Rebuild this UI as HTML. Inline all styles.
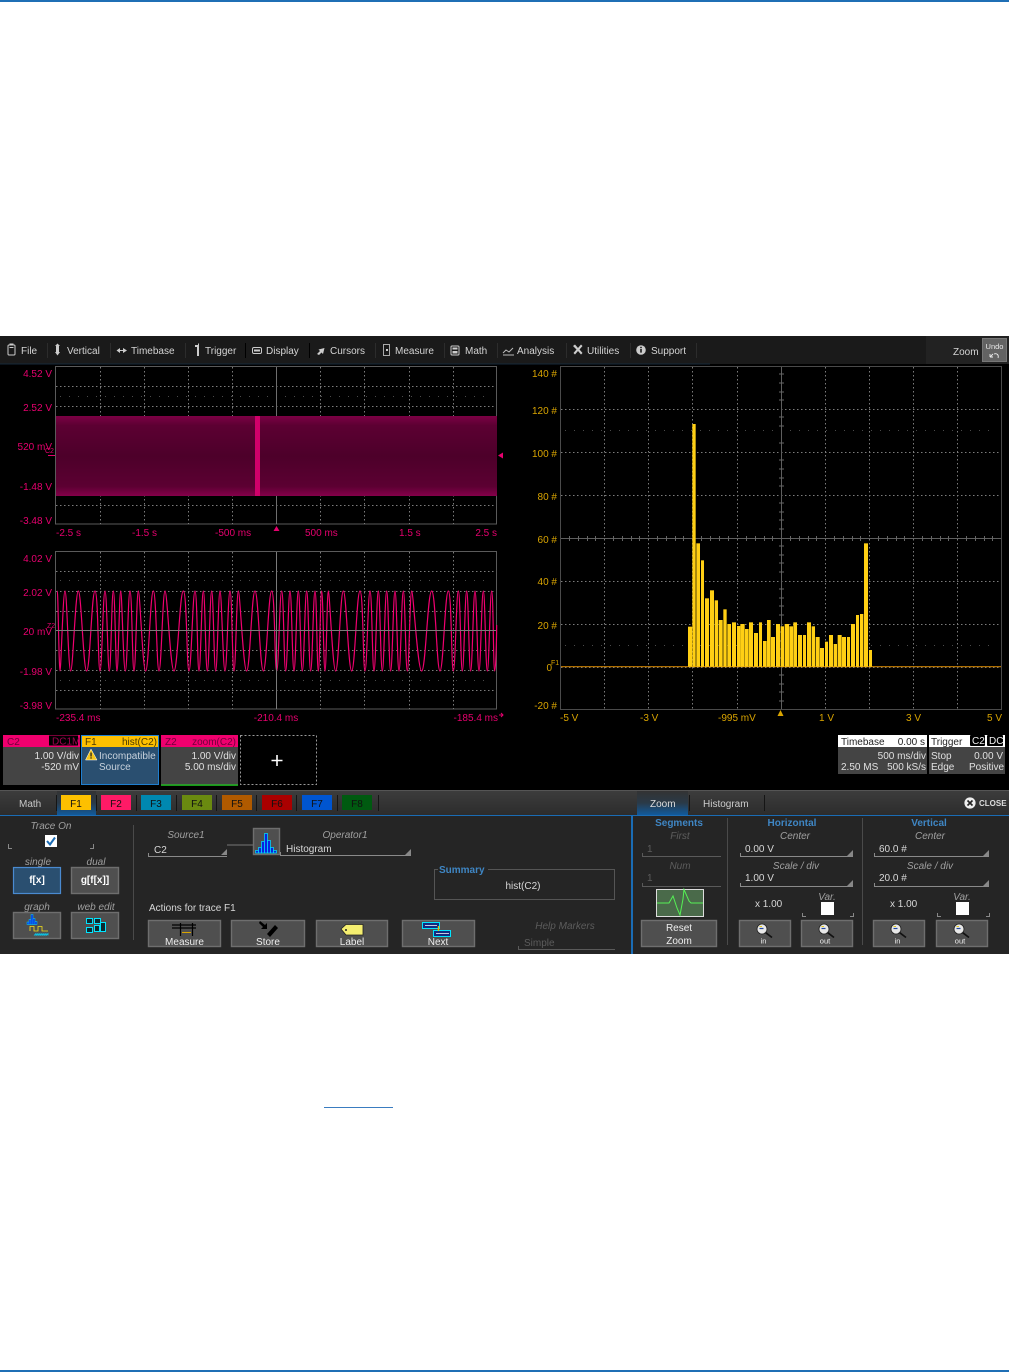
<!DOCTYPE html>
<html><head><meta charset="utf-8"><title>Scope</title>
<style>
html,body{margin:0;padding:0;background:#fff;width:1009px;height:1372px;overflow:hidden}
svg{display:block}
text{font-family:"Liberation Sans",Arial,sans-serif;font-size:10px;fill:#d8d8d8}
.m{fill:#d4d4d4}
.p{fill:#e6006e;text-anchor:end}
.ps{fill:#e6006e}
.y{fill:#d9a400;text-anchor:end}
.ys{fill:#d9a400}
.r{text-anchor:end;fill:#e0e0e0}
.c{text-anchor:middle}
.i{font-style:italic;fill:#a0a0a0;text-anchor:middle}
.d{font-style:italic;fill:#5c5c5c;text-anchor:middle}
.b{font-weight:bold;fill:#3f86c4;text-anchor:middle}
.btn{fill:#4f4f4f;stroke:#6e6e6e;stroke-width:1.4}
.k{fill:#111}
.u{stroke:#8a8a8a;stroke-width:1;fill:none}
</style></head><body>
<svg width="1009" height="1372" viewBox="0 0 1009 1372" xmlns="http://www.w3.org/2000/svg">
<defs>
<filter id="soft" filterUnits="userSpaceOnUse" x="0" y="336" width="1009" height="618" color-interpolation-filters="sRGB"><feGaussianBlur stdDeviation="0.32"/></filter>
<linearGradient id="tab" x1="0" y1="0" x2="0" y2="1"><stop offset="0" stop-color="#3c3c3c"/><stop offset="1" stop-color="#2c2c2c"/></linearGradient>
<linearGradient id="glow" x1="0" y1="0" x2="0" y2="1"><stop offset="0" stop-color="#333"/><stop offset=".5" stop-color="#2a3a48"/><stop offset="1" stop-color="#115a9c"/></linearGradient>
<linearGradient id="bnd" x1="0" y1="0" x2="0" y2="1"><stop offset="0" stop-color="#7c0044"/><stop offset=".12" stop-color="#5c0032"/><stop offset=".5" stop-color="#4d002a"/><stop offset=".88" stop-color="#5c0032"/><stop offset="1" stop-color="#85004a"/></linearGradient>
<g id="mag"><path d="M3.4 3.4L10 8.5" stroke="#111" stroke-width="1.7"/><circle cx="0" cy="0" r="5" fill="#e8e8e8" stroke="#222" stroke-width=".8"/><path d="M-2.5 -.5H1.5" stroke="#24489c" stroke-width="1.2"/><path d="M-2.5 -2.5H0" stroke="#e0c820" stroke-width="1"/></g>
<path id="tri" d="M0 6L6 6L6 0Z" fill="#888"/>
</defs>

<rect width="1009" height="1372" fill="#fff"/>
<rect x="0" y="0" width="1009" height="2" fill="#1f6fb5"/>
<rect x="0" y="1370" width="1009" height="2" fill="#1f6fb5"/>
<rect x="324" y="1107" width="69" height="1" fill="#3a7cc0"/>

<g filter="url(#soft)">
<!-- scope -->
<rect x="0" y="336" width="1009" height="618" fill="#000"/>
<!-- menu -->
<rect x="0" y="336" width="1009" height="28" fill="#1a1a1a"/>
<rect x="926" y="336" width="83" height="28" fill="#222"/>
<rect x="0" y="363.5" width="710" height="1" fill="#16293a"/>
<g stroke="#000" stroke-width="1"><path d="M47.5 343V358M110.5 343V358M185.5 343V358M245.5 343V358M309.5 343V358M375.5 343V358M444.5 343V358M497.5 343V358M566.5 343V358M630.5 343V358M696.5 343V358"/></g>
<g stroke="#4a4a4a" stroke-width=".6"><path d="M47.5 343V358M110.5 343V358M185.5 343V358M375.5 343V358M444.5 343V358M497.5 343V358M566.5 343V358M630.5 343V358M696.5 343V358"/></g>
<text class="m" x="21" y="354">File</text><text class="m" x="67" y="354">Vertical</text><text class="m" x="131" y="354">Timebase</text><text class="m" x="205" y="354">Trigger</text><text class="m" x="266" y="354">Display</text><text class="m" x="330" y="354">Cursors</text><text class="m" x="395" y="354">Measure</text><text class="m" x="465" y="354">Math</text><text class="m" x="517" y="354">Analysis</text><text class="m" x="587" y="354">Utilities</text><text class="m" x="651" y="354">Support</text><text class="m" x="953" y="355">Zoom</text>
<!-- menu icons -->
<g fill="#ccc">
<rect x="8" y="345" width="7" height="10" rx="1" fill="none" stroke="#ccc"/><rect x="9.5" y="343.5" width="4" height="2"/><rect x="9.5" y="347" width="4" height="1"/>
<path d="M57.5 343.5L60 346H59V352H60L57.5 355.5L55 352H56V346H55Z"/>
<path d="M116.5 350.5L120 348V350H123V348L127 350.5L123 353V351H120V353Z"/>
<path d="M195 345H198V343.5H199V356H197V347H195Z"/>
<rect x="252.5" y="347.5" width="9" height="6" rx="1.5" fill="none" stroke="#ccc"/><rect x="254" y="349.5" width="6" height="2"/>
<path d="M317 354L320 351L318.5 349.5L324.5 348L323 354L321.5 352.5L319 355Z"/>
<rect x="383.5" y="344.5" width="6" height="11" fill="none" stroke="#aaa"/><rect x="386" y="349" width="2" height="2"/>
<rect x="451" y="346" width="8" height="9" rx="1" fill="none" stroke="#ccc"/><rect x="452.5" y="347.5" width="5" height="2"/><rect x="452.5" y="351" width="5" height="2.5"/>
<path d="M503 355H514M503 353L506 350L509 352L513 348" fill="none" stroke="#bbb"/>
<path d="M573 346L575 344.5L578 348L581 344.5L582.5 346L579.5 349.5L582.5 353L581 354.5L578 351L575 354.5L573.5 353L576.5 349.5Z"/>
<circle cx="641" cy="350" r="4.8"/>
</g>
<rect x="640.2" y="349" width="1.6" height="3.6" fill="#1a1a1a"/><rect x="640.2" y="346.8" width="1.6" height="1.4" fill="#1a1a1a"/>
<rect x="982.5" y="338.5" width="24" height="23" fill="#636363" stroke="#777"/>
<text x="994.5" y="349" class="c" style="font-size:7.5px;fill:#e8e8e8">Undo</text>
<path d="M990 357L993 354M990 357V354M990 357H993M994 354C997 353 999 355 998 358" fill="none" stroke="#eee" stroke-width=".9"/>

<!-- left top grid -->
<rect x="55.5" y="366.5" width="441" height="157.5" fill="none" stroke="#5a5a5a"/>
<g stroke="#7c7c7c" stroke-width="1" stroke-dasharray="1.5 2.5" fill="none">
<path d="M100.5 367V524M144.5 367V524M188.5 367V524M232.5 367V524M320.5 367V524M364.5 367V524M409.5 367V524M453.5 367V524"/>
<path d="M56 386.5H496M56 406.5H496M56 505.5H496"/>
</g>
<path d="M60 396.5H492" stroke="#4a4a4a" stroke-dasharray="1 8"/>
<path d="M276.5 367V524" stroke="#6e6e6e"/>
<rect x="56" y="416" width="441" height="80" fill="url(#bnd)"/>
<rect x="255" y="416" width="5" height="80" fill="#d0006a"/>
<text class="p" x="52" y="377">4.52 V</text><text class="p" x="52" y="411">2.52 V</text><text class="p" x="52" y="450">520 mV</text><text class="p" x="52" y="490">-1.48 V</text><text class="p" x="52" y="524">-3.48 V</text>
<text x="45" y="453" class="ps" style="font-size:7px">C2</text>
<rect x="48" y="455" width="7" height="1" fill="#e6006e"/>
<text class="ps" x="56" y="536">-2.5 s</text><text class="ps" x="132" y="536">-1.5 s</text><text class="ps" x="215" y="536">-500 ms</text><text class="ps" x="305" y="536">500 ms</text><text class="ps" x="399" y="536">1.5 s</text><text class="p" x="497" y="536">2.5 s</text>
<path d="M276.5 526L279.5 531H273.5Z" fill="#e6006e"/>
<path d="M498 455.5L503 452.5V458.5Z" fill="#e6006e"/>

<!-- left bottom grid -->
<rect x="55.5" y="551.5" width="441" height="157.5" fill="none" stroke="#5a5a5a"/>
<g stroke="#7c7c7c" stroke-width="1" stroke-dasharray="1.5 2.5" fill="none">
<path d="M100.5 552V709M144.5 552V709M188.5 552V709M232.5 552V709M320.5 552V709M364.5 552V709M409.5 552V709M453.5 552V709"/>
<path d="M56 571.5H496M56 591.5H496M56 611.5H496M56 650.5H496M56 670.5H496M56 690.5H496"/>
</g>
<path d="M60 580.5H492M60 680.5H492" stroke="#4a4a4a" stroke-dasharray="1 8"/>
<g transform="translate(0,545) scale(0.33333)">
<path fill="none" stroke="#f00070" stroke-width="3.6" stroke-linejoin="round" d="M172 138 C174 138 177 378 180 378 S189 138 195 138 S205 378 212 378 S226 138 235 138 S250 378 260 378 S275 138 285 138 S294 378 300 378 S309 138 315 138 S323 378 328 378 S335 138 340 138 S347 378 351 378 S358 138 362 138 S370 378 376 378 S384 138 390 138 S397 378 402 378 S410 138 415 138 S428 378 437 378 S451 138 460 138 S470 378 477 378 S488 138 495 138 S511 378 522 378 S539 138 550 138 S560 378 567 378 S578 138 585 138 S592 378 597 378 S605 138 610 138 S617 378 622 378 S630 138 635 138 S642 378 647 378 S655 138 660 138 S669 378 675 378 S684 138 690 138 S697 378 702 378 S710 138 715 138 S730 378 740 378 S755 138 765 138 S780 378 790 378 S805 138 815 138 S824 378 830 378 S839 138 845 138 S852 378 857 378 S865 138 870 138 S877 378 882 378 S890 138 895 138 S902 378 907 378 S915 138 920 138 S927 378 932 378 S940 138 945 138 S951 378 955 378 S961 138 965 138 S971 378 975 378 S981 138 985 138 S998 378 1007 378 S1021 138 1030 138 S1045 378 1055 378 S1070 138 1080 138 S1089 378 1095 378 S1104 138 1110 138 S1117 378 1122 378 S1130 138 1135 138 S1142 378 1147 378 S1155 138 1160 138 S1167 378 1172 378 S1180 138 1185 138 S1192 378 1197 378 S1205 138 1210 138 S1217 378 1222 378 S1230 138 1235 138 S1253 378 1265 378 S1283 138 1295 138 S1310 378 1320 378 S1335 138 1345 138 S1354 378 1360 378 S1369 138 1375 138 S1382 378 1387 378 S1395 138 1400 138 S1407 378 1412 378 S1420 138 1425 138 S1432 378 1437 378 S1445 138 1450 138 S1457 378 1462 378 S1470 138 1475 138 S1480 378 1484 378 S1490 260 1490 240"/>
</g>
<path d="M276.5 552V709M56 630.5H496" stroke="#7a7a7a"/>
<text class="p" x="52" y="562">4.02 V</text><text class="p" x="52" y="596">2.02 V</text><text class="p" x="52" y="635">20 mV</text><text class="p" x="52" y="675">-1.98 V</text><text class="p" x="52" y="709">-3.98 V</text>
<text x="47" y="628" class="ps" style="font-size:7px">Z2</text>
<text class="ps" x="56" y="721">-235.4 ms</text><text class="ps c" x="276" y="721">-210.4 ms</text><text class="p" x="498" y="721">-185.4 ms</text>
<path d="M499 715H503M501 713L503 715L501 717" fill="none" stroke="#e6006e"/>

<!-- right grid -->
<rect x="560.5" y="366.5" width="441" height="343" fill="none" stroke="#4a4a4a"/>
<g stroke="#7c7c7c" stroke-width="1" stroke-dasharray="1.5 2.5" fill="none">
<path d="M604.5 367V709M648.5 367V709M692.5 367V709M737.5 367V709M825.5 367V709M869.5 367V709M913.5 367V709M957.5 367V709"/>
<path d="M561 409.5H1001M561 452.5H1001M561 495.5H1001M561 581.5H1001M561 624.5H1001M561 667.5H1001"/>
</g>
<path d="M565 430.5H997M565 645.5H997" stroke="#4a4a4a" stroke-dasharray="1 8"/>
<path d="M781.5 367V709M561 538.5H1001" stroke="#5e5e5e"/>
<path d="M779 374H784M779 383H784M779 392H784M779 400H784M779 417H784M779 426H784M779 443H784M779 460H784M779 469H784M779 478H784M779 486H784M779 503H784M779 512H784M779 520H784M779 529H784M779 546H784M779 555H784M779 563H784M779 572H784M779 589H784M779 598H784M779 606H784M779 615H784M779 632H784M779 641H784M779 649H784M779 658H784M779 675H784M779 684H784M779 692H784M779 701H784" stroke="#666"/>
<path d="M569.5 536V541M578.5 536V541M587.5 536V541M595.5 536V541M613.5 536V541M622.5 536V541M631.5 536V541M639.5 536V541M657.5 536V541M666.5 536V541M675.5 536V541M683.5 536V541M701.5 536V541M710.5 536V541M719.5 536V541M728.5 536V541M746.5 536V541M755.5 536V541M764.5 536V541M772.5 536V541M790.5 536V541M799.5 536V541M808.5 536V541M816.5 536V541M834.5 536V541M843.5 536V541M852.5 536V541M860.5 536V541M878.5 536V541M887.5 536V541M896.5 536V541M904.5 536V541M922.5 536V541M931.5 536V541M940.5 536V541M948.5 536V541M966.5 536V541M975.5 536V541M984.5 536V541M992.5 536V541" stroke="#666"/>
<rect x="561" y="666.2" width="440" height="1" fill="#d98a00"/>
<g transform="translate(660,400) scale(0.33333)" fill="#ffcf14">
<rect x="84" y="680" width="12" height="120"/><rect x="97" y="72" width="10" height="728"/><rect x="109" y="430" width="11" height="370"/><rect x="123" y="481" width="9" height="319"/><rect x="135" y="595" width="12" height="205"/><rect x="150" y="571" width="12" height="229"/><rect x="164" y="601" width="10" height="199"/><rect x="176" y="660" width="12" height="140"/><rect x="190" y="628" width="10" height="172"/><rect x="202" y="672" width="11" height="128"/><rect x="216" y="667" width="12" height="133"/><rect x="231" y="678" width="10" height="122"/><rect x="241" y="672" width="13" height="128"/><rect x="255" y="687" width="11" height="113"/><rect x="267" y="667" width="12" height="133"/><rect x="282" y="699" width="12" height="101"/><rect x="297" y="667" width="9" height="133"/><rect x="309" y="723" width="11" height="77"/><rect x="321" y="660" width="11" height="140"/><rect x="333" y="711" width="12" height="89"/><rect x="348" y="672" width="12" height="128"/><rect x="362" y="679" width="10" height="121"/><rect x="374" y="672" width="13" height="128"/><rect x="388" y="679" width="11" height="121"/><rect x="400" y="667" width="11" height="133"/><rect x="414" y="705" width="12" height="95"/><rect x="429" y="705" width="9" height="95"/><rect x="441" y="667" width="12" height="133"/><rect x="455" y="679" width="10" height="121"/><rect x="467" y="711" width="12" height="89"/><rect x="480" y="744" width="12" height="56"/><rect x="495" y="725" width="9" height="75"/><rect x="507" y="705" width="12" height="95"/><rect x="521" y="732" width="10" height="68"/><rect x="533" y="705" width="12" height="95"/><rect x="546" y="711" width="12" height="89"/><rect x="561" y="711" width="9" height="89"/><rect x="573" y="672" width="12" height="128"/><rect x="588" y="645" width="9" height="155"/><rect x="600" y="642" width="10" height="158"/><rect x="612" y="430" width="12" height="370"/><rect x="627" y="750" width="9" height="50"/>
</g>
<text class="y" x="557" y="377">140 #</text><text class="y" x="557" y="414">120 #</text><text class="y" x="557" y="457">100 #</text><text class="y" x="557" y="500">80 #</text><text class="y" x="557" y="543">60 #</text><text class="y" x="557" y="585">40 #</text><text class="y" x="557" y="629">20 #</text><text class="y" x="552" y="671">0</text><text class="y" x="557" y="709">-20 #</text>
<text x="551" y="665" class="ys" style="font-size:7px">F1</text>
<text class="ys" x="560" y="721">-5 V</text><text class="ys" x="640" y="721">-3 V</text><text class="ys" x="718" y="721">-995 mV</text><text class="ys" x="819" y="721">1 V</text><text class="ys" x="906" y="721">3 V</text><text class="y" x="1002" y="721">5 V</text>
<path d="M780.5 710L783.5 716H777.5Z" fill="#d9a400"/>

<!-- descriptors -->
<rect x="3" y="735" width="77" height="50" fill="#444"/><rect x="3" y="735" width="77" height="12" fill="#f0006e"/>
<rect x="49" y="735.5" width="29" height="10" fill="#000"/>
<text x="7" y="745" style="fill:#70003c">C2</text><text x="52" y="744.5" style="fill:#a00050">DC1M</text>
<text class="r" x="79" y="759">1.00 V/div</text><text class="r" x="79" y="770">-520 mV</text>
<rect x="81.5" y="735.5" width="77" height="49" fill="#2a4f70" stroke="#1f7fd0"/><rect x="82" y="736" width="76" height="11" fill="#fdc000"/>
<text x="85" y="745" style="fill:#4a3800">F1</text><text x="157" y="745" style="fill:#4a3800;text-anchor:end">hist(C2)</text>
<path d="M91 749L97 760H85.5Z" fill="#f5c518" stroke="#fff" stroke-width=".5"/><rect x="90.4" y="752.5" width="1.3" height="4" fill="#222"/><rect x="90.4" y="757.3" width="1.3" height="1.3" fill="#222"/>
<text x="99" y="759" style="fill:#c8d2dc">Incompatible</text><text x="99" y="770" style="fill:#c8d2dc">Source</text>
<rect x="161" y="735" width="77" height="50" fill="#444"/><rect x="161" y="735" width="77" height="12" fill="#f0006e"/><rect x="161" y="784.5" width="77" height="1.2" fill="#20e020"/>
<text x="165" y="745" style="fill:#70003c">Z2</text><text x="236" y="745" style="fill:#70003c;text-anchor:end">zoom(C2)</text>
<text class="r" x="236" y="759">1.00 V/div</text><text class="r" x="236" y="770">5.00 ms/div</text>
<rect x="240.5" y="735.5" width="76" height="49" fill="none" stroke="#999" stroke-dasharray="2 2"/>
<path d="M277 755V766M271.5 760.5H282.5" stroke="#fff" stroke-width="1.6"/>

<rect x="838" y="735" width="89" height="39" fill="#444"/><rect x="838" y="735" width="89" height="12" fill="#fff"/>
<text x="841" y="745" style="fill:#222">Timebase</text><text x="925" y="745" style="fill:#222;text-anchor:end">0.00 s</text>
<text class="r" x="926" y="759">500 ms/div</text><text x="841" y="770" style="fill:#e0e0e0">2.50 MS</text><text class="r" x="926" y="770">500 kS/s</text>
<rect x="929" y="735" width="76" height="39" fill="#444"/><rect x="929" y="735" width="76" height="12" fill="#fff"/>
<text x="931" y="745" style="fill:#222">Trigger</text>
<rect x="970" y="735" width="15" height="11" rx="1" fill="#000"/><rect x="987" y="735" width="16" height="11" rx="1" fill="#000"/>
<text x="972" y="744" style="fill:#eee">C2</text><text x="989" y="744" style="fill:#eee">DC</text>
<text x="931" y="759" style="fill:#e0e0e0">Stop</text><text class="r" x="1003" y="759">0.00 V</text><text x="931" y="770" style="fill:#e0e0e0">Edge</text><text class="r" x="1004" y="770">Positive</text>

<!-- lower panel -->
<rect x="0" y="790" width="1009" height="164" fill="#252525"/>
<rect x="0" y="790" width="1009" height="1" fill="#555"/>
<rect x="0" y="791" width="1009" height="24" fill="url(#tab)"/>
<rect x="57" y="791" width="39" height="24" fill="url(#glow)"/>
<rect x="637" y="791" width="51" height="24" fill="url(#glow)"/>
<rect x="0" y="815" width="1009" height="1" fill="#1a6cb5"/>
<path d="M56.5 795V811M96.5 795V811M136.5 795V811M176.5 795V811M216.5 795V811M256.5 795V811M296.5 795V811M337.5 795V811M378.5 795V811M689.5 795V811M764.5 795V811" stroke="#151515" stroke-width="1"/>
<text x="19" y="807" style="fill:#c8c8c8">Math</text>
<rect x="61" y="795" width="30" height="15" fill="#fdc000"/><rect x="101" y="795" width="30" height="15" fill="#ff1a66"/><rect x="141" y="795" width="30" height="15" fill="#0088b0"/><rect x="182" y="795" width="30" height="15" fill="#6a8a10"/><rect x="222" y="795" width="30" height="15" fill="#b05a00"/><rect x="262" y="795" width="30" height="15" fill="#aa0000"/><rect x="302" y="795" width="30" height="15" fill="#0055d0"/><rect x="342" y="795" width="30" height="15" fill="#005a10"/>
<text class="k c" x="76" y="807">F1</text><text class="k c" x="116" y="807">F2</text><text class="k c" x="156" y="807">F3</text><text class="k c" x="197" y="807">F4</text><text class="k c" x="237" y="807">F5</text><text class="k c" x="277" y="807">F6</text><text class="k c" x="317" y="807">F7</text><text class="k c" x="357" y="807">F8</text>
<text x="650" y="807" style="fill:#ddd">Zoom</text><text x="703" y="807" style="fill:#ccc">Histogram</text>
<circle cx="970" cy="803" r="5.6" fill="#eee"/><path d="M967.5 800.5L972.5 805.5M972.5 800.5L967.5 805.5" stroke="#222" stroke-width="1.6"/>
<text x="979" y="806" style="font-size:8px;fill:#ddd;font-weight:bold">CLOSE</text>

<!-- left section -->
<text class="i" x="51" y="829">Trace On</text>
<rect x="45" y="835" width="12" height="12" fill="#fff"/><path d="M47 841L50 844.5L55 837.5" fill="none" stroke="#1a6cb5" stroke-width="2"/>
<path d="M8.5 844V848.5H12M93.5 844V848.5H90" fill="none" stroke="#888"/>
<rect x="133" y="825" width="1" height="115" fill="#4a4a4a"/>
<text class="i" x="38" y="865">single</text><text class="i" x="96" y="865">dual</text>
<rect x="13.5" y="867.5" width="47" height="26" fill="#2a4f70" stroke="#4a8ad0" stroke-width="1.2"/>
<text x="37" y="883" class="c" style="font-weight:bold;fill:#fff">f[x]</text>
<rect x="71.5" y="867.5" width="47" height="26" class="btn"/>
<text x="95" y="883" class="c" style="font-weight:bold;fill:#fff">g[f[x]]</text>
<text class="i" x="37" y="910">graph</text><text class="i" x="96" y="910">web edit</text>
<rect x="13.5" y="912.5" width="47" height="26" class="btn"/><rect x="71.5" y="912.5" width="47" height="26" class="btn"/>
<g fill="#0a22e0" stroke="#00d8ff" stroke-width=".5"><rect x="27" y="922" width="2" height="2.5"/><rect x="29" y="919.5" width="2" height="5"/><rect x="31" y="914.5" width="2" height="10"/><rect x="33" y="918.5" width="2" height="6"/><rect x="35" y="921.5" width="2" height="3"/></g>
<path d="M30 931V926.5H34V931H38V926.5H42V931H48" fill="none" stroke="#f5e21a" stroke-width=".8"/>
<path d="M34 935.5L36 933.5V935.5L38 933.5V935.5L40 933.5V935.5L42 933.5V935.5L44 933.5V935.5L46 933.5V935.5L48 933.5V935.5" fill="none" stroke="#00d8ff" stroke-width=".7"/>
<g fill="#0b2a30" stroke="#00e5ff"><rect x="86.5" y="918.5" width="6" height="5"/><rect x="94.5" y="918.5" width="6" height="5"/><rect x="86.5" y="927.5" width="6" height="5"/><rect x="94.5" y="925.5" width="5" height="6"/><rect x="100.5" y="922.5" width="5" height="9"/></g>

<text class="i" x="186" y="838">Source1</text><text x="154" y="853">C2</text>
<path d="M148.5 853V856.5H227" class="u"/><use href="#tri" x="221" y="849"/>
<path d="M227 845H253" stroke="#777"/>
<rect x="253.5" y="828.5" width="26" height="26" class="btn"/>
<g fill="#0a22e0" stroke="#00e5ff" stroke-width=".7"><rect x="255.5" y="850.5" width="3" height="2.5"/><rect x="258.5" y="847.5" width="3" height="5.5"/><rect x="261.5" y="841.5" width="3" height="11.5"/><rect x="264.5" y="833.5" width="3" height="19.5"/><rect x="267.5" y="840.5" width="3" height="12.5"/><rect x="270.5" y="847.5" width="3" height="5.5"/><rect x="273.5" y="850.5" width="3" height="2.5"/></g>
<text class="i" x="345" y="838">Operator1</text><text x="286" y="852">Histogram</text>
<path d="M280.5 852V855.5H411" class="u"/><use href="#tri" x="405" y="849"/>
<rect x="434.5" y="869.5" width="180" height="30" fill="none" stroke="#555"/>
<rect x="438" y="866" width="50" height="8" fill="#252525"/>
<text x="439" y="873" style="font-weight:bold;fill:#3f86c4">Summary</text>
<text x="523" y="889" class="c">hist(C2)</text>
<text x="149" y="911">Actions for trace F1</text>

<rect x="148.5" y="920.5" width="72" height="26" class="btn"/><rect x="231.5" y="920.5" width="73" height="26" class="btn"/><rect x="316.5" y="920.5" width="71" height="26" class="btn"/><rect x="402.5" y="920.5" width="72" height="26" class="btn"/>
<text x="184.5" y="945" class="c" style="fill:#eee">Measure</text><text x="268" y="945" class="c" style="fill:#eee">Store</text><text x="352" y="945" class="c" style="fill:#eee">Label</text><text x="438" y="945" class="c" style="fill:#eee">Next</text>
<path d="M172 925H196M172 928H196M180.5 923V936M192.5 923V936" stroke="#000" stroke-width="1.2"/>
<path d="M182 932.5H191" stroke="#d9a400" stroke-width="1"/>
<path d="M260 921L265 925L267 923L267 929L261 929L263 927L259 923Z" fill="#000"/>
<path d="M267 934L275 925L278 928L270 937Z" fill="#000"/>
<path d="M341 929L346 924.5H363V935H346Z" fill="#f5ee70" stroke="#222" stroke-width=".8"/><circle cx="346" cy="930" r="1" fill="#222"/>
<rect x="422.5" y="922.5" width="17" height="6" fill="#122a80" stroke="#00e5ff"/><rect x="433.5" y="930.5" width="17" height="6" fill="#122a80" stroke="#00e5ff"/>
<path d="M425 925.5H437M436 933.5H449" stroke="#fff" stroke-width=".7"/><path d="M438.5 926V931" stroke="#e8b800" stroke-width="1.4"/>

<text class="d" x="565" y="929">Help Markers</text><text x="524" y="946" style="fill:#5c5c5c">Simple</text>
<path d="M518.5 946V949.5H615" fill="none" stroke="#5a5a5a"/>
<rect x="631" y="816" width="2" height="138" fill="#1a6cb5"/>

<!-- zoom section -->
<rect x="727" y="818" width="1" height="127" fill="#4a4a4a"/><rect x="862" y="818" width="1" height="127" fill="#4a4a4a"/>
<text class="b" x="679" y="826">Segments</text><text class="d" x="680" y="839">First</text>
<text x="647" y="852" style="fill:#5c5c5c">1</text><path d="M642.5 853V856.5H721" fill="none" stroke="#5a5a5a"/>
<text class="d" x="680" y="869">Num</text><text x="647" y="881" style="fill:#5c5c5c">1</text><path d="M642.5 883V886.5H721" fill="none" stroke="#5a5a5a"/>
<rect x="656.5" y="889.5" width="47" height="27" fill="#4a6a4a" stroke="#ddd"/>
<path d="M657 903H669L673 896L677 908L680 915L683 899L684 889.5L689 901L691 903H703" fill="none" stroke="#55f055"/>
<rect x="641.5" y="920.5" width="75" height="26" class="btn"/>
<text x="679" y="931" class="c" style="fill:#eee">Reset</text><text x="679" y="944" class="c" style="fill:#eee">Zoom</text>

<text class="b" x="792" y="826">Horizontal</text><text class="i" x="795" y="839">Center</text>
<text x="745" y="852">0.00 V</text><path d="M740.5 853V856.5H853" class="u"/><use href="#tri" x="847" y="850"/>
<text class="i" x="796" y="869">Scale / div</text><text x="745" y="881">1.00 V</text><path d="M740.5 883V886.5H853" class="u"/><use href="#tri" x="847" y="880"/>
<text x="755" y="907">x 1.00</text><text class="i" x="827" y="900">Var.</text>
<rect x="821" y="902" width="13" height="13" fill="#fff"/><path d="M802.5 913V916.5H806M853.5 913V916.5H850" fill="none" stroke="#888"/>
<rect x="739.5" y="920.5" width="51" height="26" class="btn"/><rect x="801.5" y="920.5" width="51" height="26" class="btn"/>
<use href="#mag" x="762" y="929"/><use href="#mag" x="824" y="929"/>
<text x="763.5" y="943.5" class="c" style="font-size:7.5px;fill:#eee">in</text><text x="825" y="943.5" class="c" style="font-size:7.5px;fill:#eee">out</text>

<text class="b" x="929" y="826">Vertical</text><text class="i" x="930" y="839">Center</text>
<text x="879" y="852">60.0 #</text><path d="M874.5 853V856.5H989" class="u"/><use href="#tri" x="983" y="850"/>
<text class="i" x="930" y="869">Scale / div</text><text x="879" y="881">20.0 #</text><path d="M874.5 883V886.5H989" class="u"/><use href="#tri" x="983" y="880"/>
<text x="890" y="907">x 1.00</text><text class="i" x="962" y="900">Var.</text>
<rect x="956" y="902" width="13" height="13" fill="#fff"/><path d="M937.5 913V916.5H941M989.5 913V916.5H986" fill="none" stroke="#888"/>
<rect x="873.5" y="920.5" width="51" height="26" class="btn"/><rect x="936.5" y="920.5" width="51" height="26" class="btn"/>
<use href="#mag" x="896" y="929"/><use href="#mag" x="959" y="929"/>
<text x="897.5" y="943.5" class="c" style="font-size:7.5px;fill:#eee">in</text><text x="960" y="943.5" class="c" style="font-size:7.5px;fill:#eee">out</text>
</g>
</svg>
</body></html>
